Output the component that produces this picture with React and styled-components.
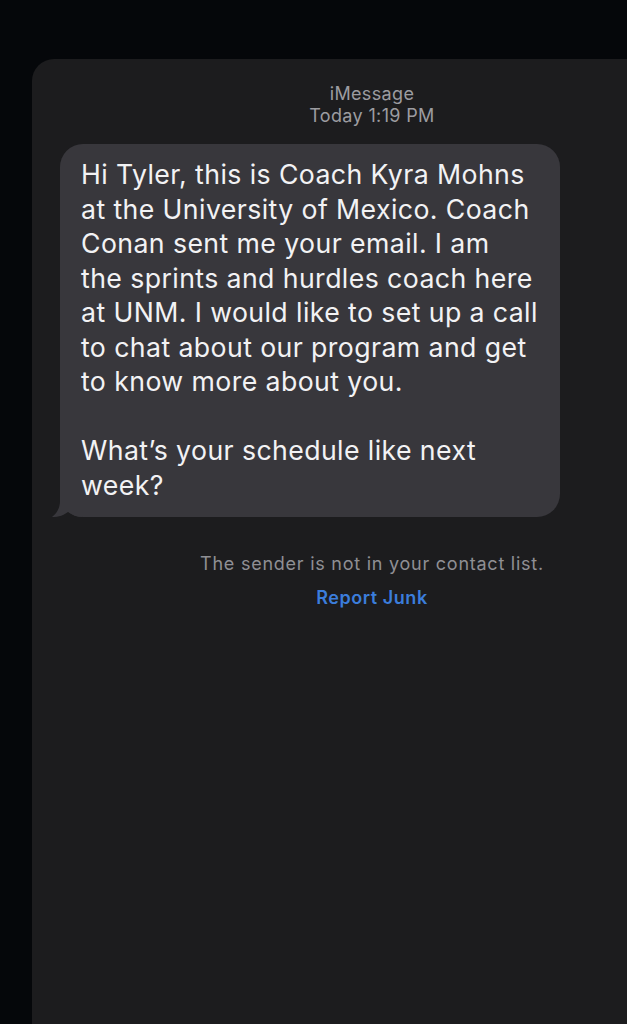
import React from "react";
import styled, { createGlobalStyle } from "styled-components";

const GlobalStyle = createGlobalStyle`
  html, body {
    margin: 0;
    padding: 0;
    background: #05070a;
    overflow: hidden;
  }
  body {
    font-family: Inter, "Noto Sans", "Liberation Sans", sans-serif;
    -webkit-font-smoothing: antialiased;
  }
`;

const Screen = styled.div`
  width: 627px;
  height: 1024px;
  background: #05070a;
  padding: 59px 0 0 32px;
  box-sizing: border-box;
  overflow: hidden;
`;

const Panel = styled.div`
  width: 680px;
  height: 1000px;
  background: #1c1c1e;
  border-radius: 22px 22px 0 0;
  display: flex;
  flex-direction: column;
  align-items: center;
  padding-top: 24px;
  box-sizing: border-box;
`;

const Header = styled.div`
  display: flex;
  flex-direction: column;
  align-items: center;
  color: #9c9ca1;
  font-size: 18px;
  line-height: 22px;
  letter-spacing: 0.35px;
`;

const Thread = styled.div`
  align-self: stretch;
  padding: 17px 0 0 28px;
  display: flex;
  flex-direction: column;
`;

const Bubble = styled.div`
  position: relative;
  width: 500px;
  box-sizing: border-box;
  background: #38373c;
  border-radius: 23px;
  padding: 13px 10px 15px 21px;
  color: #f2f2f4;
  font-size: 26.7px;
  line-height: 34.5px;
  letter-spacing: 0.4px;
  white-space: pre-line;
`;

const Tail = styled.svg`
  position: absolute;
  left: -8px;
  bottom: 0;
  width: 30px;
  height: 24px;
  display: block;
`;

const Notice = styled.div`
  display: flex;
  flex-direction: column;
  align-items: center;
  margin-top: 36px;
  gap: 12px;
`;

const NoticeText = styled.div`
  color: #8f8f94;
  font-size: 18px;
  line-height: 22px;
  letter-spacing: 0.75px;
`;

const JunkLink = styled.div`
  color: #3b7ddb;
  font-size: 18px;
  font-weight: 600;
  line-height: 22px;
  letter-spacing: 0.55px;
`;

const message = `Hi Tyler, this is Coach Kyra Mohns
at the University of Mexico. Coach
Conan sent me your email. I am
the sprints and hurdles coach here
at UNM. I would like to set up a call
to chat about our program and get
to know more about you.

What’s your schedule like next
week?`;

export default function App() {
  return (
    <>
      <GlobalStyle />
      <Screen>
        <Panel>
          <Header>
            <span>iMessage</span>
            <span>Today 1:19 PM</span>
          </Header>
          <Thread>
            <Bubble>
              {message}
              <Tail viewBox="0 0 30 24">
                <path
                  d="M8 0 L8 8 C8 15 5 20 0 24 C7 24 12 22 16 19 C20 22 25 24 30 24 L30 0 Z"
                  fill="#38373c"
                />
              </Tail>
            </Bubble>
          </Thread>
          <Notice>
            <NoticeText>The sender is not in your contact list.</NoticeText>
            <JunkLink>Report Junk</JunkLink>
          </Notice>
        </Panel>
      </Screen>
    </>
  );
}
